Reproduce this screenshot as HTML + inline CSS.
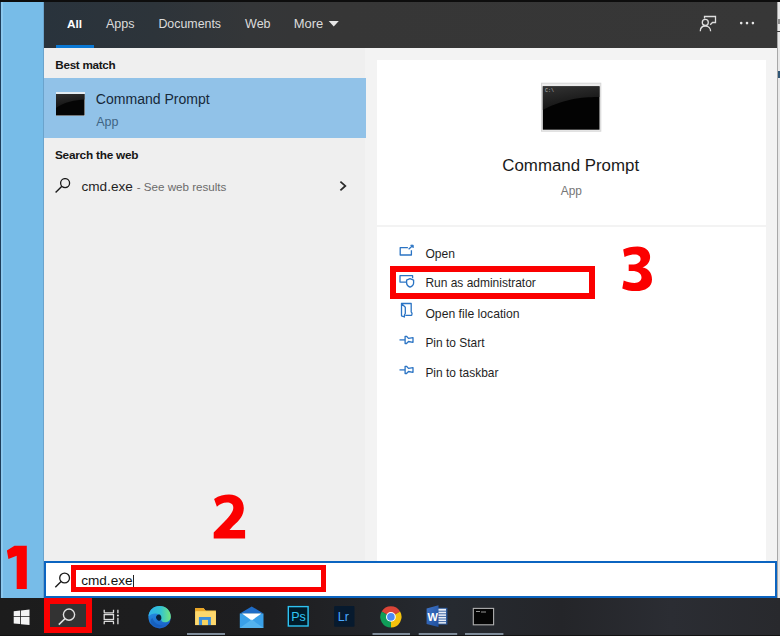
<!DOCTYPE html>
<html><head><meta charset="utf-8">
<style>
html,body{margin:0;padding:0}
body{width:780px;height:636px;overflow:hidden;position:relative;background:#f3f3f3;font-family:"Liberation Sans",sans-serif}
.a{position:absolute}
.t{position:absolute;white-space:nowrap;line-height:1}
</style></head><body>
<!-- top black line -->
<div class="a" style="left:0;top:0;width:780px;height:2px;background:#0d0d0d"></div>
<!-- left blue strip -->
<div class="a" style="left:0;top:2px;width:44px;height:596px;background:#77bce8"></div>
<div class="a" style="left:0;top:2px;width:1px;height:596px;background:#1d3d5a"></div>
<div class="a" style="left:1px;top:2px;width:2px;height:596px;background:#8cc8ee"></div>
<div class="a" style="left:43px;top:2px;width:1px;height:596px;background:#6aa3cc"></div>
<!-- header -->
<div class="a" style="left:44px;top:2px;width:733px;height:46px;background:linear-gradient(90deg,#29333c 0%,#2d343a 15%,#343638 28%,#363636 40%,#373737 100%)"></div>
<div class="a" style="left:56px;top:45px;width:38px;height:3px;background:#0a78d4"></div>
<div class="t" style="left:66.9px;top:18.6px;font-size:11.8px;font-weight:bold;color:#fff">All</div>
<div class="t" style="left:106px;top:18px;font-size:12.55px;color:#dcdcdc">Apps</div>
<div class="t" style="left:158.4px;top:18px;font-size:12.4px;color:#dcdcdc">Documents</div>
<div class="t" style="left:245.1px;top:18px;font-size:12.5px;color:#dcdcdc">Web</div>
<div class="t" style="left:293.8px;top:17.7px;font-size:12.95px;color:#dcdcdc">More</div>
<svg class="a" style="left:328px;top:19.5px" width="12" height="8"><path d="M0.7 1 L10.8 1 L5.75 6.6 Z" fill="#e6e6e6"/></svg>
<svg class="a" style="left:696px;top:12px" width="26" height="24" fill="none" stroke="#dedede" stroke-width="1.3">
<path d="M8.5 6.5 V4.5 H19.5 V10.5 H16.5 L14.2 12.8"/>
<circle cx="9.3" cy="10.4" r="3"/>
<path d="M4.3 19.2 C4.3 16 6.5 14 9.4 14 C12.3 14 14.6 16 14.6 19.2"/>
</svg>
<svg class="a" style="left:736px;top:19px" width="22" height="8" fill="#e6e6e6"><circle cx="5.2" cy="4.1" r="1.3"/><circle cx="11" cy="4.1" r="1.3"/><circle cx="16.9" cy="4.1" r="1.3"/></svg>
<!-- left panel -->
<div class="a" style="left:44px;top:48px;width:321px;height:513px;background:#efefef"></div>
<div class="t" style="left:55.3px;top:59px;font-size:11.7px;letter-spacing:-0.3px;font-weight:bold;color:#161616">Best match</div>
<div class="a" style="left:44px;top:78px;width:322px;height:60px;background:#91c2e8"></div>
<svg class="a" style="left:55px;top:91px" width="31" height="26"><defs><linearGradient id="sh1" x1="0" y1="0" x2="0.3" y2="1"><stop offset="0" stop-color="#3a3a3a"/><stop offset="1" stop-color="#151515"/></linearGradient></defs>
<rect x="1" y="1" width="29" height="24" fill="#e4ecf2"/><rect x="1" y="3" width="28.5" height="21.5" fill="#050505"/>
<path d="M1 3 H29.5 V8.5 C20 9 9 11 1 17 Z" fill="url(#sh1)" opacity="0.8"/></svg>
<div class="t" style="left:95.8px;top:91.9px;font-size:14.06px;color:#17293a">Command Prompt</div>
<div class="t" style="left:96.2px;top:116px;font-size:12.5px;color:#3f6483">App</div>
<div class="t" style="left:54.9px;top:150px;font-size:11.8px;letter-spacing:-0.22px;font-weight:bold;color:#161616">Search the web</div>
<svg class="a" style="left:55px;top:178px" width="17" height="16"><circle cx="10.1" cy="5.1" r="4.5" fill="none" stroke="#1a1a1a" stroke-width="1.3"/><path d="M6.9 8.3 L0.6 14.6" stroke="#1a1a1a" stroke-width="1.4"/></svg>
<div class="t" style="left:81.5px;top:179.9px;font-size:13.6px;color:#1f1f1f">cmd.exe</div>
<div class="t" style="left:136.7px;top:181px;font-size:11.62px;color:#6b6b6b">- See web results</div>
<svg class="a" style="left:338px;top:180px" width="10" height="13"><path d="M2.4 1.6 L7.3 5.9 L2.4 10.3" fill="none" stroke="#2a2a2a" stroke-width="1.8"/></svg>
<!-- right area -->
<div class="a" style="left:377px;top:60px;width:389px;height:165px;background:#fff"></div>
<div class="a" style="left:377px;top:227px;width:389px;height:334px;background:#fff"></div>
<div class="a" style="left:777px;top:2px;width:3px;height:596px;background:#e9e9e9"></div>
<div class="a" style="left:777px;top:2px;width:1px;height:596px;background:#a8a8a8"></div>
<div class="a" style="left:778px;top:19px;width:2px;height:5px;background:#8c8c8c"></div>
<div class="a" style="left:777px;top:31px;width:3px;height:1px;background:#3a3a3a"></div>
<div class="a" style="left:778px;top:71px;width:2px;height:7px;background:#2f5676"></div>
<!-- big icon -->
<svg class="a" style="left:541px;top:82px" width="61" height="51"><defs><linearGradient id="sh2" x1="0" y1="0" x2="0.4" y2="1"><stop offset="0" stop-color="#3c3c3c"/><stop offset="1" stop-color="#141414"/></linearGradient></defs>
<rect x="0.5" y="1.2" width="59.3" height="48" fill="#ececec" stroke="#d6d6d6" stroke-width="1"/>
<rect x="1.8" y="4.3" width="56.7" height="43.4" fill="#030303"/>
<path d="M1.8 4.3 H58.5 V15 C45 15 25 15.5 1.8 28 Z" fill="url(#sh2)" opacity="0.85"/>
<text x="4" y="10" font-family="Liberation Mono" font-size="5" fill="#bbb">C:\</text></svg>
<div class="t" style="left:502.3px;top:158.2px;font-size:16.88px;color:#1a1a1a">Command Prompt</div>
<div class="t" style="left:560.8px;top:185.5px;font-size:11.9px;color:#767676">App</div>
<!-- actions -->
<svg class="a" style="left:396px;top:240px" width="22" height="140" fill="none" stroke="#2b74c4" stroke-width="1.3" stroke-linejoin="round">
<path d="M11.9 7.6 H4.2 V15 H15.4 V10.2"/>
<path d="M12.6 9.2 L16 6.2"/><path d="M14.7 5.2 H17.2 V7.7 Z" fill="#2b74c4" stroke-width="1"/>
<path d="M10.2 42.1 H4 V35.7 H16.6 V38.3"/>
<path d="M10.6 40.1 L14 38.6 L17.6 40.1 V43 C17.6 45 16 46.4 14 47.1 C12 46.4 10.6 45 10.6 43 Z"/>
<path d="M5.5 63.5 H15.2 V72 Q16.6 73 15.8 75 L15.2 75.4 H9.3"/>
<path d="M5.5 63.5 L9.3 67.2 V73.5 L8.4 75 V77 L5.5 75.8 Z"/>
<path d="M3.5 99.9 H9.1"/><path d="M9.1 96.3 H10.5 L12.5 98.4 L17 97.7 V102.3 L12.5 101.5 L10.5 103.5 H9.1 Z"/>
<path d="M3.5 129.9 H9.1"/><path d="M9.1 126.3 H10.5 L12.5 128.4 L17 127.7 V132.3 L12.5 131.5 L10.5 133.5 H9.1 Z"/>
</svg>
<div class="t" style="left:425.4px;top:248.3px;font-size:12.1px;color:#1f1f1f">Open</div>
<div class="t" style="left:425.4px;top:277.8px;font-size:11.97px;color:#1f1f1f">Run as administrator</div>
<div class="t" style="left:425.4px;top:308px;font-size:12.2px;color:#1f1f1f">Open file location</div>
<div class="t" style="left:425.4px;top:338.2px;font-size:11.95px;color:#1f1f1f">Pin to Start</div>
<div class="t" style="left:425.4px;top:367.9px;font-size:11.95px;color:#1f1f1f">Pin to taskbar</div>
<div class="a" style="left:390px;top:266px;width:193px;height:21px;border:6px solid #fb0000"></div>
<!-- search box -->
<div class="a" style="left:44px;top:561px;width:729px;height:33px;background:#fff;border:2px solid #0b64c0"></div>
<div class="a" style="left:71.3px;top:565.3px;width:244.8px;height:16.6px;border:5.6px solid #fb0000"></div>
<div class="a" style="left:132.5px;top:575px;width:1px;height:12px;background:#222"></div>
<svg class="a" style="left:50px;top:568px" width="24" height="24"><circle cx="14.6" cy="10" r="4.9" fill="none" stroke="#1a1a1a" stroke-width="1.3"/><path d="M11.1 13.6 L5.3 19.3" stroke="#1a1a1a" stroke-width="1.4"/></svg>
<div class="t" style="left:81.2px;top:574.2px;font-size:13.6px;color:#111">cmd.exe</div>
<!-- taskbar -->
<div class="a" style="left:0;top:598px;width:780px;height:38px;background:linear-gradient(90deg,#1c1c1c 0%,#1e1e20 35%,#262a30 58%,#242529 72%,#2b2d33 86%,#28292d 100%)"></div>
<div class="a" style="left:0;top:635px;width:780px;height:1px;background:#121212"></div>
<div class="a" style="left:44px;top:598px;width:36px;height:23px;border:6px solid #fb0000;background:#333"></div>
<svg class="a" style="left:0;top:598px" width="780" height="38">
<!-- windows logo -->
<path fill="#f4f4f4" d="M13.7 13.2 L20.2 12.5 V18.3 H13.7 Z M21 12.4 L29.5 11.5 V18.3 H21 Z M13.7 19.1 H20.2 V26.1 L13.7 25.4 Z M21 19.1 H29.5 V26.9 L21 26.2 Z"/>
<!-- search -->
<circle cx="69" cy="16.6" r="5.6" fill="none" stroke="#e0e0e0" stroke-width="1.4"/>
<path d="M65 20.6 L58.8 26.6" stroke="#e0e0e0" stroke-width="1.5"/>
<!-- task view -->
<g fill="none" stroke="#dcdcdc" stroke-width="1.3">
<path d="M104.2 11.8 V14.2 Q104.2 14.8 104.8 14.8 H112.9 Q113.5 14.8 113.5 14.2 V11.8"/>
<rect x="104.2" y="16.6" width="9.3" height="4.9"/>
<path d="M104.2 26.2 V23.9 Q104.2 23.3 104.8 23.3 H112.9 Q113.5 23.3 113.5 23.9 V26.2"/>
<path d="M117.9 11.8 V15.2 M117.9 19.7 V26.2"/>
</g>
<circle cx="117.9" cy="17.4" r="1" fill="#f0f0f0"/>
<!-- edge -->
<defs>
<linearGradient id="eg1" x1="0" y1="0" x2="1" y2="1"><stop offset="0" stop-color="#2ab3e0"/><stop offset="0.6" stop-color="#1a78d2"/><stop offset="1" stop-color="#0e4fa8"/></linearGradient>
<linearGradient id="eg2" x1="0" y1="0" x2="1" y2="1"><stop offset="0" stop-color="#2fc0b8"/><stop offset="1" stop-color="#5fd36a"/></linearGradient>
<linearGradient id="wrd" x1="0" y1="0" x2="1" y2="1"><stop offset="0" stop-color="#3f74c8"/><stop offset="1" stop-color="#1f4f9c"/></linearGradient>
</defs>
<linearGradient id="eg3" x1="0" y1="0" x2="1" y2="0"><stop offset="0" stop-color="#2fb2ec"/><stop offset="0.55" stop-color="#34c4d0"/><stop offset="1" stop-color="#74e67a"/></linearGradient>
<linearGradient id="eg4" x1="0" y1="0" x2="0.3" y2="1"><stop offset="0" stop-color="#2a9eea"/><stop offset="1" stop-color="#1a62c8"/></linearGradient>
<circle cx="159.6" cy="19.2" r="11.2" fill="url(#eg4)"/>
<path d="M148.5 18.5 C149 11.5 154 8 159.6 8 C166 8 170.8 12.8 170.8 18.5 C170.8 22.5 168 24.3 164.8 24.3 C162 24.3 160.8 22.5 161.2 20.5 C160.8 17.5 158.5 15.5 155.5 15.5 C152.5 15.5 150 16.8 148.5 18.5 Z" fill="url(#eg3)"/>
<path d="M156 19 C156.5 16.8 158.5 16 160 16.8 C161.5 17.8 161.5 20 161.2 21 C160.5 22.8 159 23 158 22.5 C156.8 21.8 156 20.5 156 19 Z" fill="#08203a"/>
<path d="M152.5 20 C154 25 158.5 27.5 163 27.5 C160 29.5 154 29.5 151 25 C150 23 150.5 21 152.5 20 Z" fill="#1256b0" opacity="0.6"/>
<!-- folder -->
<path d="M195.2 10 H203.5 L205.5 12.5 H215.9 V27.1 H195.2 Z" fill="#f5c84e"/>
<path d="M195.2 10 H203.5 L205.8 13 H195.2 Z" fill="#eaa627"/>
<rect x="195.2" y="13.4" width="20.7" height="13.7" fill="#fdd86d"/>
<path d="M198.9 27.1 V19 H210.9 V27.1 H207.8 V21.9 H202.2 V27.1 Z" fill="#3b8fdc"/>
<rect x="202.2" y="21.9" width="5.6" height="5.2" fill="#f7d35e"/>
<rect x="187" y="35" width="38" height="2" fill="#7f8c9a"/>
<!-- mail -->
<path d="M239.8 15.5 L251.7 8.4 L263.5 15.5 Z" fill="#1f6cc6"/>
<rect x="239.8" y="15.5" width="23.7" height="14.5" fill="#3aa0e8"/>
<path d="M242 15.5 H261.5 L251.7 22.5 Z" fill="#ffffff"/>
<path d="M239.8 30 L251.7 21.5 L263.5 30 Z" fill="#5bb8f0" opacity="0.8"/>
<!-- Ps -->
<rect x="287.6" y="7.9" width="21.2" height="20.8" fill="#001b29"/>
<rect x="288.3" y="8.6" width="19.8" height="19.4" fill="none" stroke="#2fc3f2" stroke-width="1.4"/>
<text x="291.2" y="23" font-family="Liberation Sans" font-size="12.5" fill="#31c5f4">Ps</text>
<!-- Lr -->
<rect x="334.1" y="8" width="20.4" height="20.7" rx="1" fill="#071a2e"/>
<text x="337.8" y="23" font-family="Liberation Sans" font-size="12.5" fill="#4aa8ff">Lr</text>
<!-- chrome -->
<path d="M390.9 18.9 L381.72 13.6 A10.6 10.6 0 0 1 400.08 13.6 Z" fill="#db4437"/>
<path d="M390.9 18.9 L400.08 13.6 A10.6 10.6 0 0 1 390.9 29.5 Z" fill="#f4c20d"/>
<path d="M390.9 18.9 L390.9 29.5 A10.6 10.6 0 0 1 381.72 13.6 Z" fill="#0f9d58"/>
<circle cx="390.9" cy="18.9" r="4.9" fill="#ffffff"/>
<circle cx="390.9" cy="18.9" r="3.8" fill="#4a8af4"/>
<rect x="372.5" y="35" width="37.5" height="2" fill="#7f8c9a"/>
<!-- word -->
<path d="M434 9.8 H447.4 V26.6 H434 Z" fill="#2b5797"/><path d="M436 10.8 H446 V25.6 H436 Z" fill="#e9eef7"/>
<path d="M436 13.2 H446 M436 15.8 H446 M436 18.4 H446 M436 21 H446 M436 23.6 H446" stroke="#2b579a" stroke-width="0.9"/>
<path d="M426.6 10.6 L438.5 7.3 V29.1 L426.6 26 Z" fill="url(#wrd)"/>
<text x="427.4" y="23.2" font-family="Liberation Sans" font-size="11" font-weight="bold" fill="#ffffff">W</text>
<rect x="418.7" y="35" width="38.5" height="2" fill="#7f8c9a"/>
<!-- cmd -->
<rect x="473.3" y="10.4" width="20.3" height="16.4" fill="#050505" stroke="#b0b0b0" stroke-width="1.1"/>
<path d="M476 13.5 H480 M481 14 H486" stroke="#bbbbbb" stroke-width="0.8"/>
<rect x="465" y="35" width="38.4" height="2" fill="#7f8c9a"/>
</svg>
<!-- numbers -->
<svg class="a" style="left:0;top:0" width="780" height="636">
<path fill="#fb0000" d="M14.5 545.7 L26.8 545.7 L26.8 588.9 L16.7 588.9 L16.7 555.8 L8.4 558.9 L6.9 550.6 Z"/>
<path fill="#fb0000" d="M214.1 498.9 C219 495.5 224 494.4 229 494.4 C238 494.4 243.8 500 243.8 508 C243.8 515 240 520 233 526 L229.5 530 L245.1 530 L245.1 538.6 L213.7 538.6 L213.7 532.5 L225 521 C231 515 233.3 511 233.3 507.5 C233.3 504 230.5 502.6 227 502.6 C223 502.6 219.5 504.5 216.9 506.7 Z"/>
<path fill="#fb0000" d="M623.2 249.6 C627 247.3 632 246.4 637.5 246.4 C645.5 246.4 650.1 250.8 650.1 257 C650.1 262 647 265.8 642.5 267.3 C648.5 268.6 652 273 652 279.5 C652 287 645.5 291.1 636 291.1 C630.5 291.1 625.5 290 622.3 288.4 L623.7 280.6 C627 282.2 631 282.9 634.5 282.9 C639 282.9 641.5 280.5 641.5 277.5 C641.5 273.5 638 271 632 271 L628.7 271 L628.7 264.6 L632 264.6 C637 264.6 640.6 262.5 640.6 259 C640.6 256.3 638.3 254.6 634.5 254.6 C631 254.6 627.5 255.6 624.5 256.9 Z"/>
</svg>
</body></html>
